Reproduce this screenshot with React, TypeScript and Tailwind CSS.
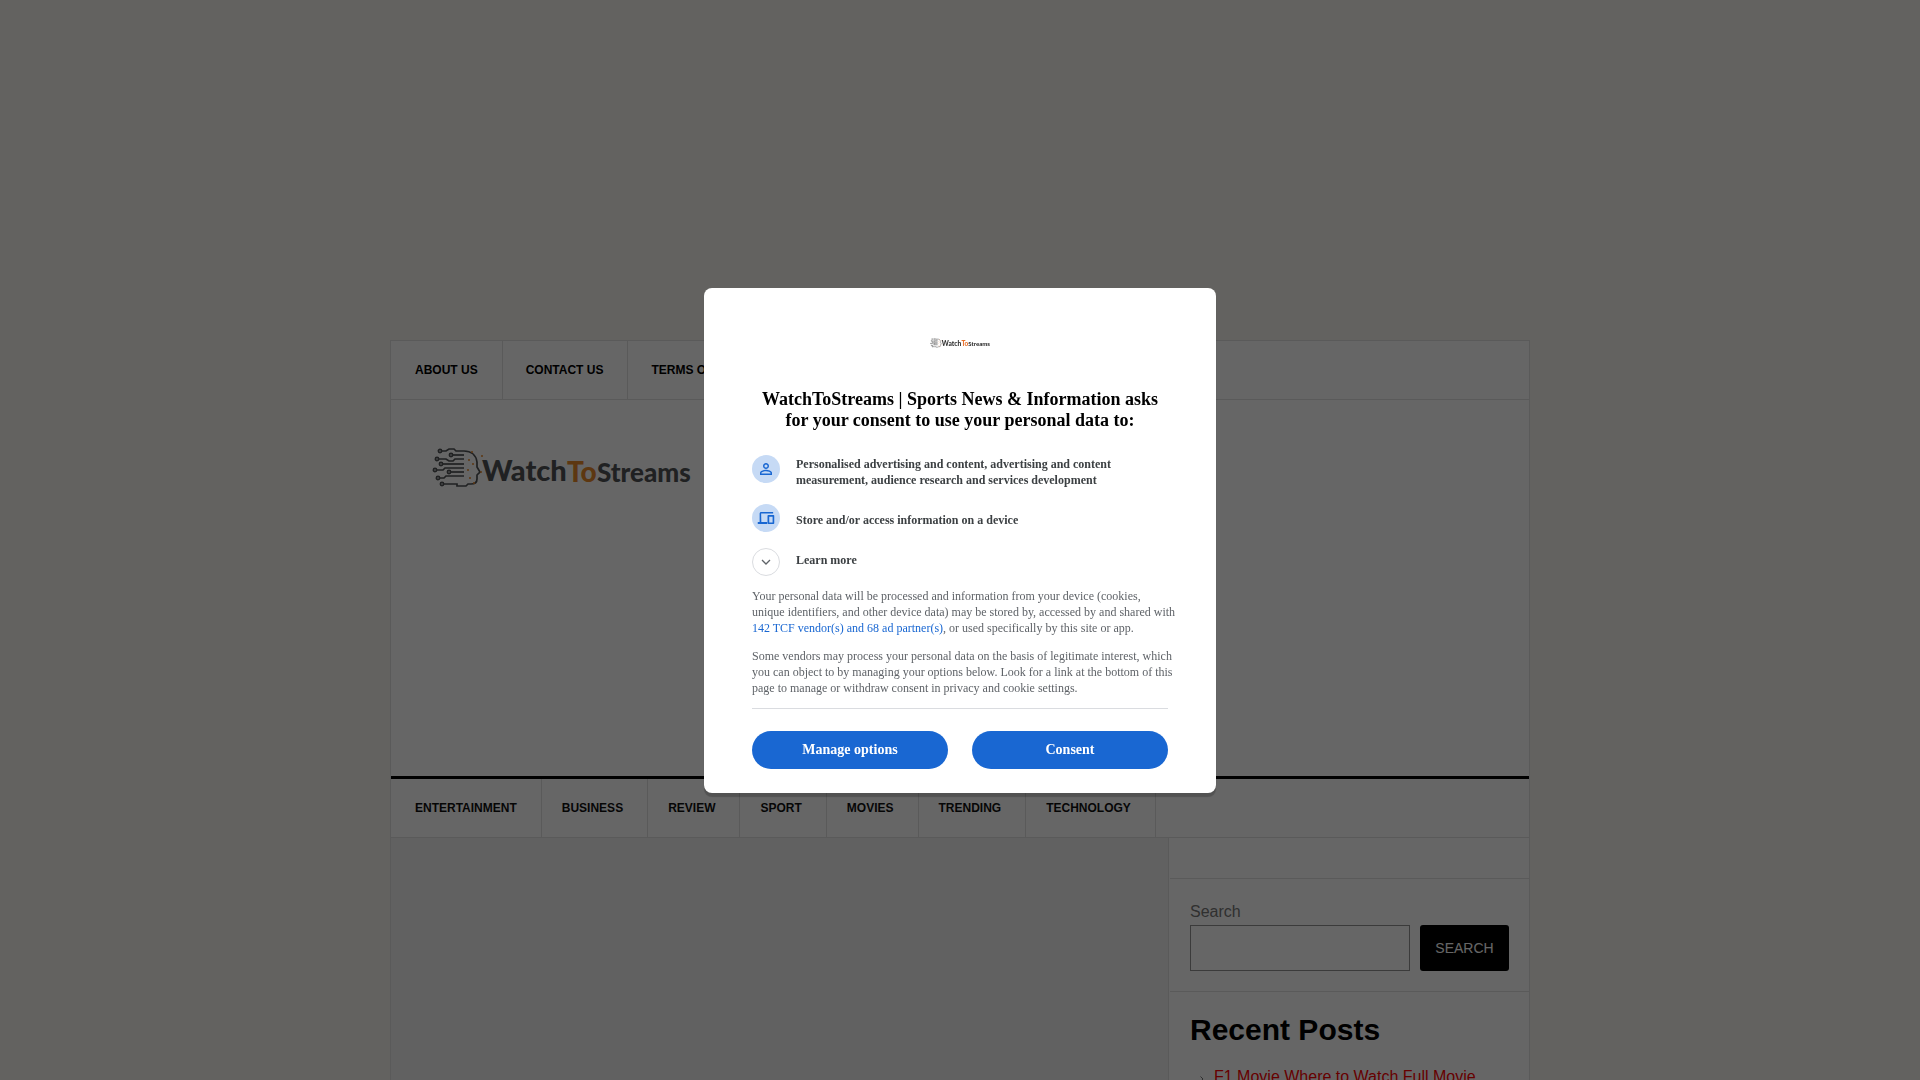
import { useId } from "react";
import type { ReactNode } from "react";

const topLinks = ["About Us", "Contact Us", "Terms of Service", "Privacy Policy"];
const mainLinks = ["Entertainment", "Business", "Review", "Sport", "Movies", "Trending", "Technology"];

function Logo({ className, ink, accent }: { className: string; ink: string; accent: string }) {
  return (
    <svg viewBox="-2 -1 260 44" className={className} role="img" aria-label="WatchToStreams">
      <g fill="none" stroke={ink} strokeWidth="1.7">
        <circle cx="7" cy="4" r="1.6" />
        <path d="M9 4h4l3-2h5l2 2h8c7 0 12 4 13 11l0 5 3 5-3 3v4c0 3-2 5-6 5h-3l-2 2h-9v-2H10" />
        <circle cx="4" cy="12" r="1.6" />
        <path d="M6 12h7l3 2h4l2-2h9" />
        <circle cx="18" cy="8" r="1.6" />
        <path d="M20 8h11" />
        <circle cx="8" cy="17" r="1.6" />
        <path d="M10 17h21" />
        <circle cx="2" cy="23" r="1.6" />
        <path d="M4 23h6l2-2h19" />
        <circle cx="16" cy="25" r="1.6" />
        <path d="M18 25h13" />
        <circle cx="5" cy="31" r="1.6" />
        <path d="M7 31h4l2-2h18" />
        <circle cx="9" cy="37" r="1.6" />
      </g>
      <g fill={accent}>
        <circle cx="39" cy="5" r="1" />
        <circle cx="49" cy="9" r="1" />
        <circle cx="36" cy="13" r="1" />
        <circle cx="40" cy="17" r="1" />
        <circle cx="35" cy="23" r="1" />
        <circle cx="48" cy="25" r="1" />
        <circle cx="37" cy="31" r="1" />
        <circle cx="41" cy="36" r="1" />
      </g>
      <g fontFamily="Lato, sans-serif" fontWeight="900">
        <text x="49" y="34" fontSize="29" fill={ink}>Watch</text>
        <text x="134" y="35" fontSize="28" fill={accent}>To</text>
        <text x="164" y="35" fontSize="26" fill={ink}>Streams</text>
      </g>
    </svg>
  );
}

function Purpose({ icon, children }: { icon: ReactNode; children: ReactNode }) {
  return (
    <li className="flex gap-4">
      <span className="flex size-7 shrink-0 items-center justify-center rounded-full bg-[#c6daf5] text-[#1967d2]">
        {icon}
      </span>
      {children}
    </li>
  );
}

function ConsentDialog() {
  const titleId = useId();
  return (
    <div className="fixed inset-0 z-10 flex items-center justify-center bg-black/60 p-4">
      <section
        role="dialog"
        aria-modal="true"
        aria-labelledby={titleId}
        className="w-full max-w-[512px] rounded-lg bg-white px-12 pt-12 pb-6 font-['Liberation_Serif',serif] text-xs text-[#5f6368] shadow-[0_4px_1px_rgba(0,0,0,0.2)]"
      >
        <Logo className="mx-auto h-[14px] w-[60px]" ink="#333333" accent="#e8702a" />
        <h1 id={titleId} className="mt-[39px] text-center text-lg leading-[21px] font-bold text-black">
          WatchToStreams | Sports News &amp; Information asks for your consent to use your personal data to:
        </h1>
        <ul className="mt-6 flex flex-col gap-4 leading-4 font-bold text-[#3c4043]">
          <Purpose
            icon={
              <svg viewBox="0 0 24 24" className="size-[18px]" fill="currentColor">
                <path d="M12 5.9a2.1 2.1 0 1 1 0 4.2 2.1 2.1 0 0 1 0-4.2m0 9c2.97 0 6.1 1.46 6.1 2.1v1.1H5.9V17c0-.64 3.13-2.1 6.1-2.1M12 4C9.79 4 8 5.79 8 8s1.79 4 4 4 4-1.79 4-4-1.79-4-4-4m0 9c-2.67 0-8 1.34-8 4v3h16v-3c0-2.66-5.33-4-8-4" />
              </svg>
            }
          >
            <span className="pt-px">
              Personalised advertising and content, advertising and content measurement, audience research and services
              development
            </span>
          </Purpose>
          <Purpose
            icon={
              <svg viewBox="0 0 24 24" className="size-[18px]" fill="currentColor">
                <path d="M5.500 6H21.500V4H5.500c-1.100 0-2 .9-2 2v11.300H1V20h12.500V17.300H5.800zM22 8h-7c-.55 0-1 .45-1 1v10c0 .55.45 1 1 1h7c.55 0 1-.45 1-1V9c0-.55-.45-1-1-1m-1.200 10h-4.500v-7.600h4.500z" />
              </svg>
            }
          >
            <span className="pt-2">Store and/or access information on a device</span>
          </Purpose>
        </ul>
        <button type="button" className="mt-4 flex gap-4 text-left leading-4 font-bold text-[#3c4043]">
          <span className="flex size-7 items-center justify-center rounded-full border border-[#dadce0] text-[#5f6368]">
            <svg viewBox="0 0 10 6" className="h-[6px] w-[10px]" fill="none" stroke="currentColor" strokeWidth="1.300">
              <path d="M1 1l4 4 4-4" />
            </svg>
          </span>
          <span className="pt-1">Learn more</span>
        </button>
        <p className="-mr-3 mt-3 leading-4">
          Your personal data will be processed and information from your device (cookies,
          <br />
          unique identifiers, and other device data) may be stored by, accessed by and shared with{" "}
          <a href="#vendors" className="text-[#1967d2]">
            142 TCF vendor(s) and 68 ad partner(s)
          </a>
          , or used specifically by this site or app.
        </p>
        <p className="-mr-3 mt-3 leading-4">
          Some vendors may process your personal data on the basis of legitimate interest, which you can object to by
          managing your options below. Look for a link at the bottom of this page to manage or withdraw consent in
          privacy and cookie settings.
        </p>
        <div className="mt-3 grid grid-cols-2 gap-6 border-t border-[#dadce0] pt-[22px] text-sm font-bold text-white">
          <button type="button" className="h-[38px] rounded-full bg-[#1967d2]">
            Manage options
          </button>
          <button type="button" className="h-[38px] rounded-full bg-[#1967d2]">
            Consent
          </button>
        </div>
      </section>
    </div>
  );
}

export default function App() {
  const searchId = useId();
  return (
    <div className="h-screen overflow-hidden bg-[#f7f6ef] pt-[340px] font-['Liberation_Sans',sans-serif] text-[#787878]">
      <div className="mx-auto flex min-h-full w-full max-w-[1140px] flex-col border border-[#e1e1e1] bg-white">
        <nav aria-label="Pages" className="border-b border-[#e1e1e1]">
          <ul className="flex text-xs font-bold text-black uppercase">
            {topLinks.map((label) => (
              <li key={label} className="border-r border-[#e1e1e1] pl-[23px] first:pl-6">
                <a href="#page" className="block pr-6 leading-[58px]">
                  {label}
                </a>
              </li>
            ))}
          </ul>
        </nav>
        <header className="h-[376px] px-10 pt-[46px]">
          <a href="#home" className="inline-block">
            <Logo className="h-11 w-[260px]" ink="#505355" accent="#e98a2c" />
          </a>
        </header>
        <nav aria-label="Categories" className="border-t-3 border-b border-t-black border-b-[#e1e1e1]">
          <ul className="flex text-xs font-bold text-[#111111] uppercase">
            {mainLinks.map((label) => (
              <li key={label} className="border-r border-[#e1e1e1] pl-5 first:pl-6">
                <a href="#category" className="block pr-6 leading-[58px]">
                  {label}
                </a>
              </li>
            ))}
          </ul>
        </nav>
        <div className="flex grow">
          <main className="grow bg-[#f2f2f2]" />
          <aside className="w-[361px] shrink-0 border-l border-[#e1e1e1] pl-px">
            <div className="h-10" />
            <section className="border-t border-[#e1e1e1] p-5">
              <label htmlFor={searchId} className="block leading-[26px]">
                Search
              </label>
              <form className="flex gap-[10px]" onSubmit={(e) => e.preventDefault()}>
                <input id={searchId} type="search" className="h-[46px] min-w-0 grow border border-[#949494] px-2" />
                <button
                  type="submit"
                  className="w-[89px] shrink-0 rounded-[3px] bg-black text-sm text-white uppercase"
                >
                  Search
                </button>
              </form>
            </section>
            <section className="border-t border-[#e1e1e1] p-5">
              <h2 className="text-[30px] leading-9 font-bold text-black">Recent Posts</h2>
              <ul className="mt-[17px] leading-6">
                <li className="flex gap-[10px] pl-[10px]">
                  <svg viewBox="0 0 4 6" className="mt-1 h-[6px] w-1 self-center" fill="none" stroke="#787878">
                    <path d="M.5.5 3 3 .5 5.500" />
                  </svg>
                  <a href="#post" className="text-[#ff0000]">
                    F1 Movie Where to Watch Full Movie
                  </a>
                </li>
              </ul>
            </section>
          </aside>
        </div>
      </div>
      <ConsentDialog />
    </div>
  );
}
